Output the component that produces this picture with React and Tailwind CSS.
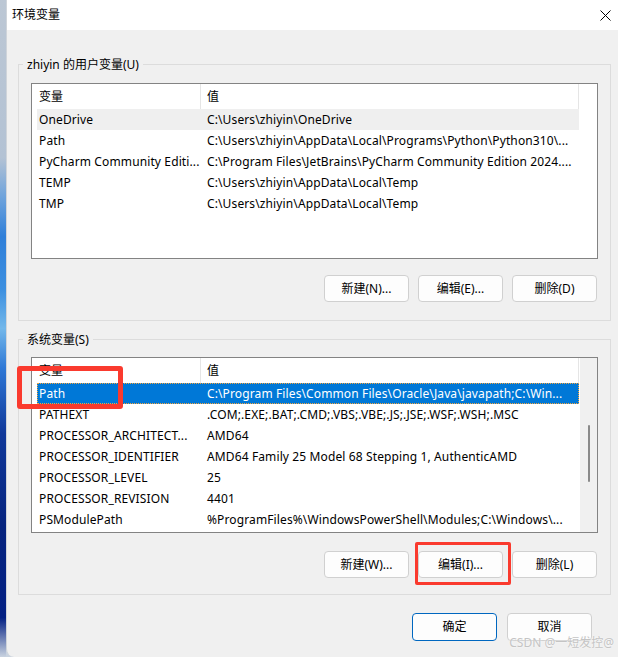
import React from "react";

const userRows = [
  ["OneDrive", "C:\\Users\\zhiyin\\OneDrive"],
  ["Path", "C:\\Users\\zhiyin\\AppData\\Local\\Programs\\Python\\Python310\\..."],
  ["PyCharm Community Editi...", "C:\\Program Files\\JetBrains\\PyCharm Community Edition 2024...."],
  ["TEMP", "C:\\Users\\zhiyin\\AppData\\Local\\Temp"],
  ["TMP", "C:\\Users\\zhiyin\\AppData\\Local\\Temp"],
];

const sysRows = [
  ["Path", "C:\\Program Files\\Common Files\\Oracle\\Java\\javapath;C:\\Win..."],
  ["PATHEXT", ".COM;.EXE;.BAT;.CMD;.VBS;.VBE;.JS;.JSE;.WSF;.WSH;.MSC"],
  ["PROCESSOR_ARCHITECT...", "AMD64"],
  ["PROCESSOR_IDENTIFIER", "AMD64 Family 25 Model 68 Stepping 1, AuthenticAMD"],
  ["PROCESSOR_LEVEL", "25"],
  ["PROCESSOR_REVISION", "4401"],
  ["PSModulePath", "%ProgramFiles%\\WindowsPowerShell\\Modules;C:\\Windows\\..."],
];

function Btn({ children, primary }) {
  return (
    <div
      className={
        "w-[85px] h-[27px] rounded-[4px] flex items-center justify-center text-[12px] text-black " +
        (primary
          ? "border border-[#0067c0] bg-[#fdfdfd]"
          : "border border-[#d0d0d0] bg-[#fdfdfd]")
      }
    >
      {children}
    </div>
  );
}

function List({ rows, hoverIndex, selectedIndex, scrollbar }) {
  return (
    <div className="h-[176px] border border-[#838383] bg-white overflow-hidden flex">
      <div className="w-[547px] flex flex-col shrink-0">
        <div className="h-[25px] flex shrink-0 items-center text-[12px] text-black">
          <div className="w-[169px] h-full pl-[7px] flex items-center border-r border-[#e5e5e5]">变量</div>
          <div className="w-[378px] h-full pl-[6px] flex items-center border-r border-[#e5e5e5]">值</div>
        </div>
        {rows.map((r, i) => {
          const sel = i === selectedIndex;
          const hov = i === hoverIndex;
          return (
            <div
              key={i}
              className={
                "ml-[5px] w-[542px] h-[21px] shrink-0 flex items-center text-[12px] tracking-[0.12px] whitespace-nowrap " +
                (sel
                  ? "bg-[#0078d7] text-white outline-1 outline-dotted outline-[#f3a53f] -outline-offset-1"
                  : hov
                  ? "bg-[#efefef] text-black"
                  : "text-black")
              }
            >
              <div className="w-[168px] pl-[2px] overflow-hidden shrink-0">{r[0]}</div>
              <div className="pl-[2px] overflow-hidden">{r[1]}</div>
            </div>
          );
        })}
      </div>
      {scrollbar ? (
        <div className="w-[18px] h-full bg-[#f0f0f0] border-l border-white flex flex-col items-center pt-[67px]">
          <div className="w-[2px] h-[57px] bg-[#8a8a8a] rounded-full ml-[1px]" />
        </div>
      ) : (
        <div className="w-[18px] h-full bg-white" />
      )}
    </div>
  );
}

function Group({ label, children, listGap, btnGap, bottomPad }) {
  return (
    <div className={"w-[593px] border border-[#dcdcdc] px-[12px] " + bottomPad}>
      <div className="-mt-[9px] -ml-[8px] w-fit px-[4px] bg-[#f0f0f0] text-[12px] leading-[17px] text-black">
        {label}
      </div>
      <div className={listGap}>{children[0]}</div>
      <div className={"flex justify-end gap-[9px] mr-[1px] " + btnGap}>{children[1]}</div>
    </div>
  );
}

export default function App() {
  return (
    <div className="relative flex w-[618px] h-[657px] overflow-hidden bg-[#c9d3e0] font-['Noto_Sans','Noto_Sans_CJK_SC',sans-serif]">
      <div className="w-[6px] h-full shrink-0 bg-[linear-gradient(180deg,#bcc7d4_0%,#b3c2d4_24%,#6ea3dc_30%,#2f7fd9_36%,#3c8fe0_44%,#72b7ea_50%,#2f78d6_56%,#10389a_66%,#06247f_80%,#032084_94%,#c9d3e0_100%)]" />
      <div className="flex-1 flex flex-col bg-[#f0f0f0] rounded-bl-[8px] border-l border-[#cfd4da]">
        <div className="h-[30px] bg-white flex items-center justify-between pl-[5px] pr-[7px] shrink-0">
          <span className="text-[12px] text-black">环境变量</span>
          <svg width="11" height="11" viewBox="0 0 11 11" className="text-black">
            <path d="M0.5 0.5 L10.5 10.5 M10.5 0.5 L0.5 10.5" stroke="currentColor" strokeWidth="1" fill="none" />
          </svg>
        </div>
        <div className="flex-1 flex flex-col pl-[11px] pt-[34px]">
          <Group label="zhiyin 的用户变量(U)" listGap="mt-[10px]" btnGap="mt-[16px]" bottomPad="pb-[18px]">
            <List rows={userRows} hoverIndex={0} />
            <>
              <Btn>新建(N)...</Btn>
              <Btn>编辑(E)...</Btn>
              <Btn>删除(D)</Btn>
            </>
          </Group>
          <div className="mt-[18px]">
            <Group label="系统变量(S)" listGap="mt-[9px]" btnGap="mt-[18px]" bottomPad="pb-[16px]">
              <List rows={sysRows} selectedIndex={0} scrollbar />
              <>
                <Btn>新建(W)...</Btn>
                <Btn>编辑(I)...</Btn>
                <Btn>删除(L)</Btn>
              </>
            </Group>
          </div>
          <div className="w-[593px] flex justify-end gap-[10px] pr-[19px] mt-[18px]">
            <div className="w-[85px] h-[28px] rounded-[4px] border border-[#0067c0] bg-[#fdfdfd] flex items-center justify-center text-[12px] text-black">确定</div>
            <div className="w-[85px] h-[28px] rounded-[4px] border border-[#d0d0d0] bg-[#fdfdfd] flex items-center justify-center text-[12px] text-black">取消</div>
          </div>
        </div>
      </div>

      <div className="absolute left-[17px] top-[366px] w-[106px] h-[43px] border-[5px] border-[#fa3a2e] rounded-[3px]" />
      <div className="absolute left-[415px] top-[542px] w-[96px] h-[43px] border-[3px] border-[#fa3a2e] rounded-[2px]" />
      <div className="absolute right-[4px] bottom-[5px] text-[12px] text-[#c4c4c4] [text-shadow:0_0_2px_#ffffff]">CSDN @一短发控@</div>
    </div>
  );
}
